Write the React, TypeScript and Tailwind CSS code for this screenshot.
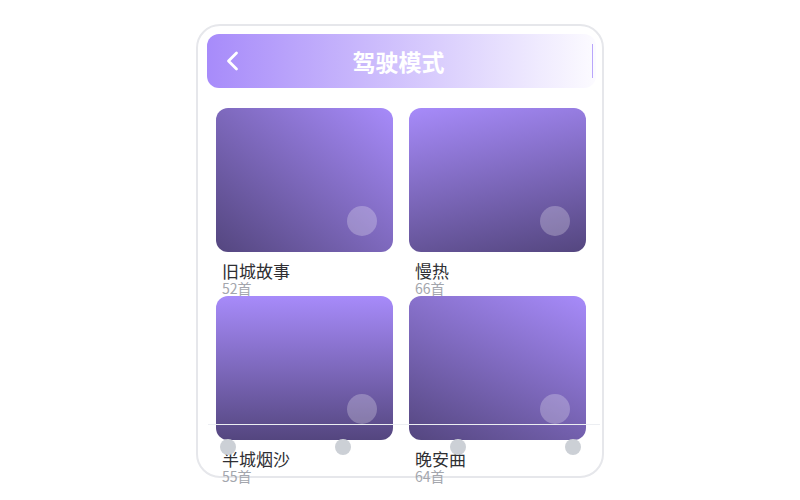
import React from "react";

const cards = [
  { title: "旧城故事", count: "52首", bg: "bg-[linear-gradient(to_bottom_left,#a78bfa,#54467f)]" },
  { title: "慢热", count: "66首", bg: "bg-[linear-gradient(168deg,#a78bfa,#54467f)]" },
  { title: "半城烟沙", count: "55首", bg: "bg-[linear-gradient(180deg,#a78bfa,#54467f)]" },
  { title: "晚安曲", count: "64首", bg: "bg-[linear-gradient(205deg,#a78bfa,#54467f)]" },
];

export default function App() {
  return (
    <div
      className="w-[800px] h-[500px] bg-white overflow-hidden pt-6"
      style={{ fontFamily: '"Noto Sans CJK SC", "Noto Sans", sans-serif' }}
    >
      <div className="relative mx-auto w-[408px] h-[454px] rounded-[24px] border-2 border-[#e6e7eb] bg-white">
        {/* header */}
        <div className="relative mt-[8px] ml-[9px] w-[389px] h-[54px] rounded-[12px] bg-[linear-gradient(90deg,#a78bfa,#fcfbff)] flex items-center">
          <svg className="ml-[19px]" width="13" height="20" viewBox="0 0 13 20" fill="none">
            <path d="M10.5 2 L2.5 10 L10.5 18" stroke="white" strokeWidth="2.8" strokeLinecap="round" strokeLinejoin="round" />
          </svg>
          <div className="absolute inset-0 flex items-center justify-center pointer-events-none">
            <span className="text-white font-bold text-[23px] leading-none pr-[6px]">驾驶模式</span>
          </div>
          <div className="absolute right-[3px] top-[10px] w-px h-[34px] bg-[#b9a6fb]" />
        </div>

        {/* grid */}
        <div className="ml-[18px] mt-[20px] w-[370px] grid grid-cols-2 gap-x-[16px]">
          {cards.map((c) => (
            <div key={c.title} className="h-[188px] flex flex-col">
              <div className={`relative h-[145px] rounded-[12px] ${c.bg}`}>
                <div className="absolute right-[16px] bottom-[16px] w-[30px] h-[30px] rounded-full bg-white/25" />
              </div>
              <div className="pl-[6px] mt-[8px] text-[17px] leading-[21px] text-[#2f2f33]">{c.title}</div>
              <div className="pl-[6px] text-[14px] leading-[15px] text-[#a3a6ad]">{c.count}</div>
            </div>
          ))}
        </div>

        {/* bottom overlay bar */}
        <div className="absolute left-[10px] top-[398px] w-[392px] border-t border-[#eceef2]">
          <div className="ml-[12px] mr-[19px] mt-[14px] flex justify-between">
            <div className="w-[16px] h-[16px] rounded-full bg-[#ccd0d6]" />
            <div className="w-[16px] h-[16px] rounded-full bg-[#ccd0d6]" />
            <div className="w-[16px] h-[16px] rounded-full bg-[#ccd0d6]" />
            <div className="w-[16px] h-[16px] rounded-full bg-[#ccd0d6]" />
          </div>
        </div>
      </div>
    </div>
  );
}
